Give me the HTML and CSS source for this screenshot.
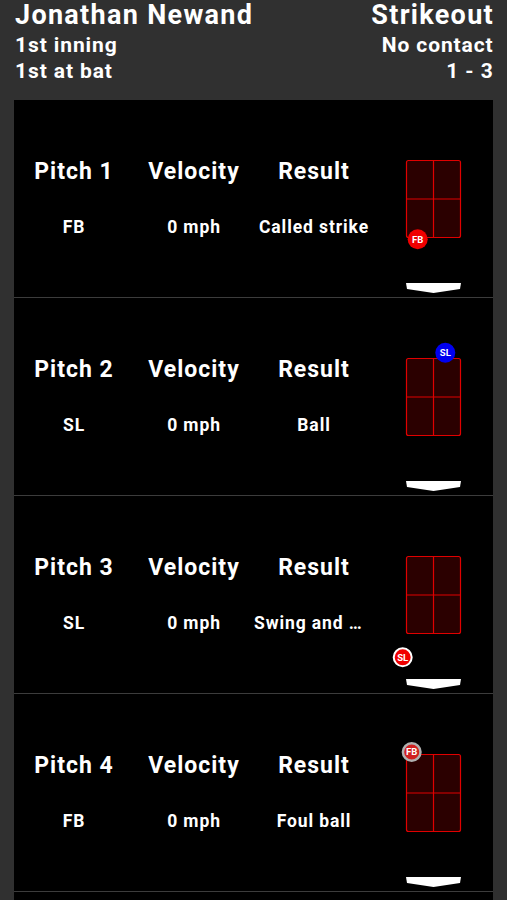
FILE: index.html
```html
<!DOCTYPE html>
<html>
  <head>
    <title>At bat</title>
    <link rel="stylesheet" href="styles.css">
  </head>
  <body>
    <div class="header">
      <div class="header-col">
        <div class="name">Jonathan Newand</div>
        <div class="sub">1st inning</div>
        <div class="sub">1st at bat</div>
      </div>
      <div class="header-col right">
        <div class="name">Strikeout</div>
        <div class="sub">No contact</div>
        <div class="sub">1 - 3</div>
      </div>
    </div>

    <div class="pitches">
      <div class="pitch">
        <div class="col"><div class="title">Pitch 1</div><div class="value">FB</div></div>
        <div class="col"><div class="title">Velocity</div><div class="value">0 mph</div></div>
        <div class="col"><div class="title">Result</div><div class="value">Called strike</div></div>
        <svg class="zone" width="119" height="197" viewBox="0 0 119 197">
          <rect class="box" x="32.5" y="60.5" width="54" height="77" rx="2"></rect>
          <line class="grid" x1="59.5" y1="60.5" x2="59.5" y2="137.5"></line>
          <line class="grid" x1="32.5" y1="99" x2="86.5" y2="99"></line>
          <polygon class="plate" points="32,183 87,183 86,189 59.5,193 33,189"></polygon>
          <circle class="ball red" cx="43.7" cy="139.3" r="10"></circle>
          <text class="ball-text" x="43.7" y="142.6">FB</text>
        </svg>
      </div>

      <div class="pitch">
        <div class="col"><div class="title">Pitch 2</div><div class="value">SL</div></div>
        <div class="col"><div class="title">Velocity</div><div class="value">0 mph</div></div>
        <div class="col"><div class="title">Result</div><div class="value">Ball</div></div>
        <svg class="zone" width="119" height="197" viewBox="0 0 119 197">
          <rect class="box" x="32.5" y="60.5" width="54" height="77" rx="2"></rect>
          <line class="grid" x1="59.5" y1="60.5" x2="59.5" y2="137.5"></line>
          <line class="grid" x1="32.5" y1="99" x2="86.5" y2="99"></line>
          <polygon class="plate" points="32,183 87,183 86,189 59.5,193 33,189"></polygon>
          <circle class="ball blue" cx="71.3" cy="54.7" r="10"></circle>
          <text class="ball-text" x="71.3" y="58">SL</text>
        </svg>
      </div>

      <div class="pitch">
        <div class="col"><div class="title">Pitch 3</div><div class="value">SL</div></div>
        <div class="col"><div class="title">Velocity</div><div class="value">0 mph</div></div>
        <div class="col"><div class="title">Result</div><div class="value">Swing and miss</div></div>
        <svg class="zone" width="119" height="197" viewBox="0 0 119 197">
          <rect class="box" x="32.5" y="60.5" width="54" height="77" rx="2"></rect>
          <line class="grid" x1="59.5" y1="60.5" x2="59.5" y2="137.5"></line>
          <line class="grid" x1="32.5" y1="99" x2="86.5" y2="99"></line>
          <polygon class="plate" points="32,183 87,183 86,189 59.5,193 33,189"></polygon>
          <circle class="ball red ringed" cx="28.7" cy="161.3" r="9"></circle>
          <text class="ball-text" x="28.7" y="164.6">SL</text>
        </svg>
      </div>

      <div class="pitch">
        <div class="col"><div class="title">Pitch 4</div><div class="value">FB</div></div>
        <div class="col"><div class="title">Velocity</div><div class="value">0 mph</div></div>
        <div class="col"><div class="title">Result</div><div class="value">Foul ball</div></div>
        <svg class="zone" width="119" height="197" viewBox="0 0 119 197">
          <rect class="box" x="32.5" y="60.5" width="54" height="77" rx="2"></rect>
          <line class="grid" x1="59.5" y1="60.5" x2="59.5" y2="137.5"></line>
          <line class="grid" x1="32.5" y1="99" x2="86.5" y2="99"></line>
          <polygon class="plate" points="32,183 87,183 86,189 59.5,193 33,189"></polygon>
          <circle class="ball red grey-ring" cx="37.7" cy="58" r="8.8"></circle>
          <text class="ball-text" x="37.7" y="61.3">FB</text>
        </svg>
      </div>

      <!-- next pitch card, only its top edge is in view -->
      <div class="pitch"></div>
    </div>
  </body>
</html>
```

FILE: styles.css
```css
body {
  margin: 0;
  background-color: #303030;
  color: #ffffff;
  font-family: Roboto, "Liberation Sans", sans-serif;
  font-weight: bold;
}

.header {
  display: flex;
  justify-content: space-between;
  padding: 0 13px 0 15px;
}

.header-col.right {
  text-align: right;
}

.name {
  font-size: 27px;
  line-height: 30px;
  letter-spacing: 1.3px;
  margin-bottom: 2px;
}

.sub {
  font-size: 21px;
  line-height: 26px;
  letter-spacing: 0.9px;
}

.right .sub {
  margin-right: 0.4px;
}

.pitches {
  margin: 16px 14px 0 14px;
  display: flex;
  flex-direction: column;
  gap: 1px;
  background-color: #3c3c3c;
}

.pitch {
  display: grid;
  grid-template-columns: 120px 120px 120px 119px;
  height: 197px;
  background-color: #000000;
}

.col {
  text-align: center;
  padding-top: 58px;
  min-width: 0;
}

.title {
  font-size: 23px;
  line-height: 28px;
  letter-spacing: 1px;
}

.value {
  font-size: 17.5px;
  line-height: 20px;
  letter-spacing: 0.9px;
  margin-top: 31px;
  white-space: nowrap;
  overflow: hidden;
  text-overflow: ellipsis;
}

.zone {
  display: block;
}

.box {
  fill: #2b0000;
  stroke: #e00000;
  stroke-width: 1.2;
}

.grid {
  stroke: #e00000;
  stroke-width: 1.2;
}

.plate {
  fill: #ffffff;
}

.ball.red {
  fill: #f00000;
}

.ball.blue {
  fill: #0000f0;
}

.ball.ringed {
  stroke: #ffffff;
  stroke-width: 2;
}

.ball.grey-ring {
  stroke: #b0b0b0;
  stroke-width: 2.5;
  fill: #d02020;
}

.ball-text {
  fill: #ffffff;
  font-size: 9.5px;
  font-weight: bold;
  text-anchor: middle;
}
```
